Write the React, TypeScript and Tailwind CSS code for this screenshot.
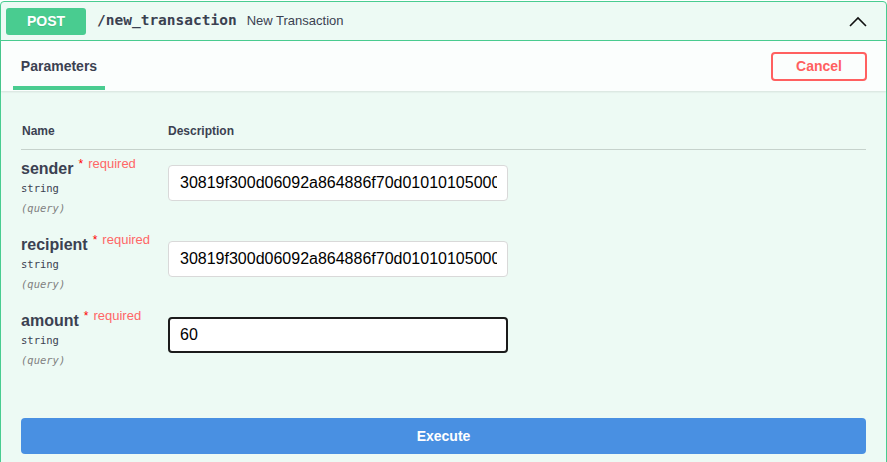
import React from "react";

const sans = { fontFamily: '"Liberation Sans", Arial, sans-serif' };
const mono = { fontFamily: '"DejaVu Sans Mono", "Liberation Mono", monospace' };

function ParamRow({ name, value, focused }: { name: string; value: string; focused?: boolean }) {
  return (
    <div className="flex h-[76px]">
      <div className="w-[147px] shrink-0 pt-[9px]">
        <div className="flex h-[20px] items-center">
          <span className="text-[16px] font-bold leading-[20px] text-[#3b4151]">{name}</span>
          <span className="relative top-[-5px] ml-[5px] text-[12px] leading-none text-[#ff0000]">*</span>
          <span className="relative top-[-6px] ml-[5px] text-[13px] leading-none text-[#ff6666]">required</span>
        </div>
        <div className="mt-[1px] flex h-[18px] items-center text-[10.5px] text-[#3b4151]" style={mono}>
          string
        </div>
        <div className="mt-[2px] flex h-[18px] items-center text-[10.5px] italic text-[#808080]" style={mono}>
          (query)
        </div>
      </div>
      <div className="pt-[15px]">
        <input
          readOnly
          value={value}
          className={
            focused
              ? "block h-[36px] w-[340px] rounded-[4px] border-2 border-[#1b1b1b] bg-white pl-[10px] pr-[9px] text-[16px] text-black outline-none"
              : "block h-[36px] w-[340px] rounded-[4px] border border-[#d9d9d9] bg-white pl-[11px] pr-[10px] text-[16px] text-black outline-none"
          }
          style={sans}
        />
      </div>
    </div>
  );
}

export default function App() {
  const key = "30819f300d06092a864886f70d010101050003818d0030818902818100";
  return (
    <div className="h-[462px] w-[887px] overflow-hidden bg-white pt-px" style={sans}>
      <div className="h-[480px] rounded-[4px] border border-[#49cc90] bg-[#edfaf4]">
        {/* summary */}
        <div className="flex h-[39px] items-center border-b border-[#49cc90] pl-[5px] pr-[18px]">
          <div className="flex h-[27px] w-[80px] items-center justify-center rounded-[3px] bg-[#49cc90] text-[14px] font-bold text-white [text-shadow:0_1px_0_rgba(0,0,0,0.1)]">
            POST
          </div>
          <span className="pl-[11px] pr-[10px] text-[14.5px] font-bold text-[#3b4151]" style={mono}>
            /new_transaction
          </span>
          <span className="text-[13px] text-[#3b4151]">New Transaction</span>
          <div className="flex-1" />
          <svg width="20" height="12" viewBox="0 0 20 12" className="mt-[2px]">
            <polyline points="2,10 10,2 18,10" fill="none" stroke="#111" strokeWidth="1.6" />
          </svg>
        </div>
        {/* tab header */}
        <div className="relative flex h-[50px] items-center justify-between bg-[#fbfefd] pl-[12px] pr-[19px] shadow-[0_1px_2px_rgba(0,0,0,0.1)]">
          <div className="relative flex h-full w-[92px] items-center justify-center">
            <span className="text-[14px] font-bold text-[#3b4151]">Parameters</span>
            <div className="absolute bottom-[1px] left-0 h-[4px] w-[92px] bg-[#49cc90]" />
          </div>
          <div className="flex h-[29px] w-[96px] items-center justify-center rounded-[4px] border-2 border-[#ff6060] bg-transparent text-[14px] font-bold text-[#ff6060]">
            Cancel
          </div>
        </div>
        {/* table */}
        <div className="px-[20px] pt-[21px]">
          <div className="flex h-[38px] items-center border-b border-[#c6d2cc] text-[12px] font-bold text-[#3b4151]">
            <div className="w-[147px] pl-px">Name</div>
            <div>Description</div>
          </div>
          <ParamRow name="sender" value={key} />
          <ParamRow name="recipient" value={key} />
          <ParamRow name="amount" value="60" focused />
          <div className="mt-[40px] flex h-[36px] items-center justify-center rounded-[4px] bg-[#4990e2] text-[14px] font-bold text-white">
            Execute
          </div>
        </div>
      </div>
    </div>
  );
}
